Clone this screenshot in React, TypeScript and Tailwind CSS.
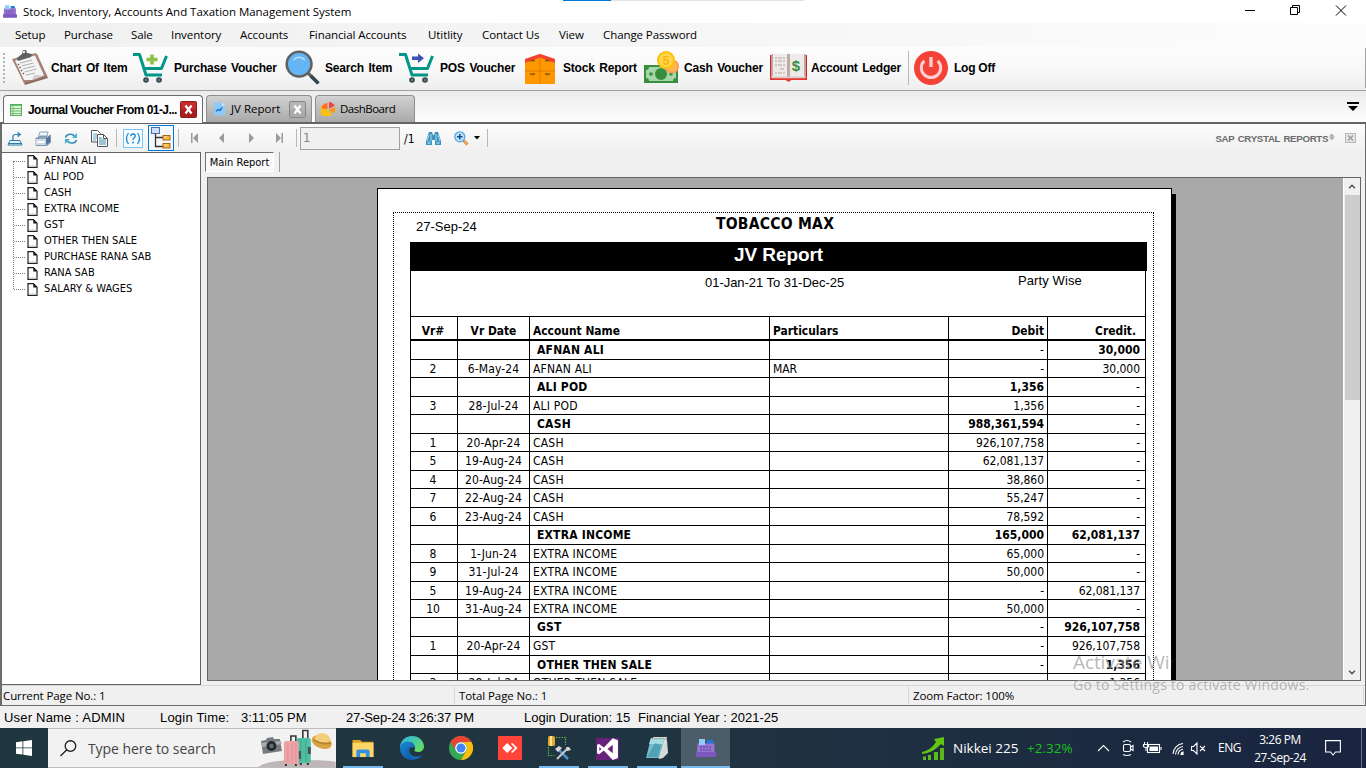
import React from "react";
import { FcSearch } from "react-icons/fc";

const UI = "font-['Open_Sans','Noto_Sans',sans-serif]";
const TAHOMA = "font-['DejaVu_Sans_Condensed','DejaVu_Sans',sans-serif]";
const ARIAL = "font-['Liberation_Sans',Arial,sans-serif]";

/* ---------- icons ---------- */

const AppIcon = ({ className }: { className: string }) => (
  <svg viewBox="0 0 20 20" className={className}>
    <rect x="11" y="2" width="6" height="4" rx="1" fill="#1e78e0" />
    <path d="M1.500 5.500h17V15H1z" fill="#9575cd" />
    <rect x="0" y="14" width="20" height="5" rx="1" fill="#7e57c2" />
    <path d="M4 9h12M4 12h12" stroke="#7048b8" strokeWidth="1.400" strokeDasharray="2 1" />
    <rect x="3" y="1" width="6" height="6" fill="#90caf9" />
  </svg>
);

const Clipboard = () => (
  <svg viewBox="0 0 38 37" className="h-[37px] w-[38px]">
    <path d="M2 11 26 5l11 24-23 7z" fill="#8d6e63" />
    <path d="M1 10 25 4l11 23-23 7z" fill="#a98274" />
    <path d="M4 11.500 24 6.500l9 20L21 31l-8 0z" fill="#f4f4f4" />
    <path d="M21 31l2-5 10 .5z" fill="#cfcfcf" />
    <path d="M9 14l12-3M10.500 17l12-3M12 20l12-3M13.500 23l12-3M15 26l9-2" stroke="#b0b0b0" strokeWidth="1" />
    <path d="M7 15l1 1M8.500 18l1 1M10 21l1 1M12 24l1 1" stroke="#555" strokeWidth="1.300" />
    <path d="M6 9l5-4 1-4 3 0 1 3 5 1-1 3-13 4z" fill="#616161" />
    <circle cx="13" cy="3" r="1.200" fill="#eee" />
  </svg>
);

const Cart = ({ arrow }: { arrow?: boolean }) => (
  <svg viewBox="0 0 35 32" className="h-[32px] w-[35px]">
    <path d="M0 2.500h6.500l6.500 20.500h16M10.500 16.500h18l5-12.500" fill="none" stroke="#009688" strokeWidth="3" strokeLinejoin="round" />
    <circle cx="13" cy="28" r="2.800" fill="#37474f" />
    <circle cx="26" cy="28" r="2.800" fill="#37474f" />
    <circle cx="13" cy="28" r="1" fill="#78909c" />
    <circle cx="26" cy="28" r="1" fill="#78909c" />
    {arrow ? (
      <path d="M13 4.500h6V1.500L25 6.300 19 11V8H13z" fill="#3f51b5" />
    ) : (
      <path d="M17.200 2.500h3.600v3.200h3.700v3.600h-3.700v3.200h-3.600V9.300h-3.700V5.700h3.700z" fill="#8bc34a" />
    )}
  </svg>
);

const Cabinet = () => (
  <svg viewBox="0 0 30 30" className="mt-[3px] h-[30px] w-[30px]">
    <path d="M0 5 15 0l15 5v25H0z" fill="#ff9800" />
    <path d="M0 5 15 0l15 5v4L15 3.500 0 9z" fill="#f44336" />
    <path d="M15 4v26M0 17h30" stroke="#e07c00" strokeWidth="1" />
    <path d="M5 6.500h5M20 6.500h5M5 20h5M20 20h5" stroke="#8a5200" strokeWidth="1.300" />
    <path d="M7 7.500h1M22 7.500h1M7 21.200h1M22 21.200h1" stroke="#c66900" strokeWidth="1.400" />
  </svg>
);

const Money = () => (
  <svg viewBox="0 0 35 33" className="h-[33px] w-[35px]">
    <rect x="0" y="14" width="34" height="18" fill="#388e3c" />
    <path d="M5 16h24c0 2 1 3 3 3v8c-2 0-3 1-3 3H5c0-2-1-3-3-3v-8c2 0 3-1 3-3z" fill="#a5d6a7" />
    <circle cx="17" cy="23" r="6" fill="#388e3c" />
    <circle cx="7" cy="23" r="1.800" fill="#388e3c" />
    <circle cx="27" cy="23" r="1.800" fill="#388e3c" />
    <circle cx="28" cy="15.500" r="7" fill="#ff9860" />
    <circle cx="28" cy="15.500" r="5.200" fill="#ffb74d" />
    <circle cx="22" cy="9" r="9" fill="#ffc107" />
    <circle cx="22" cy="9" r="7" fill="#ffd54f" />
    <text x="22" y="13.500" textAnchor="middle" fontSize="12" fontWeight="700" fontFamily="Liberation Sans" fill="#ffb300">5</text>
  </svg>
);

const Book = () => (
  <svg viewBox="0 0 37 28" className="h-[28px] w-[37px]">
    <path d="M0 1h5v23H0zM32 1h5v23h-5z" fill="#c62828" />
    <path d="M0 22h37v4H21c-1 2-4 2-5 0H0z" fill="#e53935" />
    <rect x="1.500" y="0" width="34" height="24" fill="#eeeae9" />
    <path d="M1.500 0h1.500v22h-1.500zM34 0h1.500v22H34zM17 0h3v24h-3z" fill="#bcaaa4" />
    <path d="M2 22.500h33v1.800H2z" fill="#d7ccc8" />
    <path d="M8 4h7M8 7h7M8 11h7M10 15h5M8 19h7" stroke="#b8a49c" strokeWidth="1.200" strokeDasharray="4 1" />
    <path d="M5 4h2M5 7h2M5 11h2M5 19h2" stroke="#b8a49c" strokeWidth="1.200" />
    <text x="26" y="16.500" textAnchor="middle" fontSize="15" fontWeight="700" fontFamily="Liberation Sans" fill="#388e3c">$</text>
  </svg>
);

const Power = () => (
  <svg viewBox="0 0 34 34" className="h-[34px] w-[34px]">
    <circle cx="17" cy="17" r="17" fill="#f44336" />
    <path d="M10.300 9.800a9.700 9.700 0 1 0 13.400 0" fill="none" stroke="#ffcdd2" strokeWidth="3" />
    <path d="M17 6v10" stroke="#ffcdd2" strokeWidth="3.400" />
  </svg>
);

const TabGrid = () => (
  <svg viewBox="0 0 12 12" className="h-[12px] w-[12px] shrink-0">
    <rect x=".5" y=".5" width="11" height="11" fill="#dff3df" stroke="#55b059" />
    <path d="M1 1.500h10M1 4.500h10M1 7h10M1 9.500h10M3 1v10" stroke="#6cc070" strokeWidth="1" />
  </svg>
);

const TabDoc = () => (
  <svg viewBox="0 0 12 13" className="h-[14px] w-[12px] shrink-0">
    <path d="M1 0h8l3 3v10H1z" fill="#90caf9" />
    <path d="M9 0l3 3H9z" fill="#d6ebff" />
    <path d="M3 9l2-2 2 1 2-3" stroke="#1976d2" strokeWidth="1.400" fill="none" />
  </svg>
);

const TabPie = () => (
  <svg viewBox="0 0 14 14" className="h-[14px] w-[14px] shrink-0">
    <path d="M6 2v6l5 4A6.500 6.500 0 1 1 6 2z" fill="#ffc107" />
    <path d="M6.500 7V1A6 6 0 0 0 .5 6.500z" fill="#ff6d2d" />
    <path d="M8 6.500V0a6.500 6.500 0 0 1 5.500 4z" fill="#f44336" />
    <path d="M8 7.500 14 5.500a6 6 0 0 1-2 6z" fill="#ff9800" />
  </svg>
);

const Close = ({ red }: { red?: boolean }) => (
  <svg viewBox="0 0 17 17" className="h-[17px] w-[17px] shrink-0">
    <rect x=".5" y=".5" width="16" height="16" rx="1" fill={red ? "#c62c2c" : "#b5b5b5"} stroke={red ? "#8c1b1b" : "#868686"} />
    <path d="M1 8.500h15V16H1z" fill={red ? "#a51f1f" : "#ababab"} />
    <path d="M5.500 4.500l6 8M11.500 4.500l-6 8" stroke="#fff" strokeWidth="2.200" />
  </svg>
);

const ExportIcon = () => (
  <svg viewBox="0 0 16 15" className="h-[15px] w-[16px]">
    <path d="M3 9.500h10l2 4.500H1z" fill="#e6f5fb" stroke="#2b7ca8" />
    <path d="M1 12.500h14" stroke="#2b7ca8" />
    <path d="M6 10V5.500c0-1.500 1-2 2.500-2H11" fill="none" stroke="#2b7ca8" strokeWidth="1.200" />
    <path d="M10.500 .5 14.500 3.500l-4 3z" fill="#3b8fbd" />
  </svg>
);

const PrintIcon = () => (
  <svg viewBox="0 0 16 15" className="h-[15px] w-[16px]">
    <path d="M5 1h8l-1.500 6H3z" fill="#eef6fc" stroke="#89a5bb" />
    <path d="M1 7h3l1-2h7l-1 2h1l3-3 1 1v6l-4 3.500H1z" fill="#8fa7bf" stroke="#6d87a2" strokeWidth=".8" />
    <path d="M1 8h10v6H1z" fill="#cddbe8" />
    <path d="M2.500 10h7v2h-7z" fill="#fff" />
    <path d="M11 8l4-3v6l-4 3z" fill="#50739a" />
  </svg>
);

const RefreshIcon = () => (
  <svg viewBox="0 0 14 12" className="h-[13px] w-[14px]">
    <path d="M1.500 5C2.500 1.500 8 .5 10.500 3.500" fill="none" stroke="#3390b8" strokeWidth="1.600" />
    <path d="M13 .5v5H8z" fill="#46b2d4" />
    <path d="M12.500 7.500C11.500 11 6 11.500 3.500 8.800" fill="none" stroke="#3390b8" strokeWidth="1.600" />
    <path d="M1 11.500v-5h5z" fill="#46b2d4" />
  </svg>
);

const CopyIcon = () => (
  <svg viewBox="0 0 17 17" className="h-[17px] w-[17px]">
    <path d="M.5.5h6l3 3v8.500h-9z" fill="#fff" stroke="#555" />
    <path d="M2 4h4M2 6h5M2 8h5M2 10h3" stroke="#65a6c4" />
    <path d="M6.500 4.500h6l4 4v8h-10z" fill="#fff" stroke="#555" />
    <path d="M12.500 4.500v4h4" fill="none" stroke="#555" />
    <path d="M8 8h3M8 10h7M8 12h7M8 14h7" stroke="#3c89ae" />
  </svg>
);

const HelpIcon = () => (
  <svg viewBox="0 0 20 19" className="h-[19px] w-[20px]">
    <rect x=".5" y=".5" width="19" height="18" fill="#f4fbff" stroke="#7cc4f2" />
    <path d="M5.500 4Q1.500 9.500 5.500 15M14.500 4Q18.500 9.500 14.500 15" fill="none" stroke="#1e88d8" strokeWidth="1.200" />
    <path d="M7.800 7.300Q8 5 10 5q2.200 0 2.200 2 0 1.200-1.300 2Q10 9.700 10 11" fill="none" stroke="#1e88d8" strokeWidth="1.400" />
    <circle cx="10" cy="13.500" r="1" fill="#1e88d8" />
  </svg>
);

const TreeIcon = () => (
  <svg viewBox="0 0 20 22" className="h-[22px] w-[20px]">
    <path d="M4.500 7v12.500H12M4.500 10.500H12" fill="none" stroke="#333" strokeWidth="1.300" />
    <rect x=".5" y=".5" width="8" height="6" fill="#cfe0fa" stroke="#536c9c" />
    <rect x="12" y="8.500" width="7" height="4.500" fill="#ffb546" stroke="#a96618" />
    <rect x="12" y="16.500" width="7" height="4.500" fill="#ffb546" stroke="#a96618" />
    <path d="M13 10h3M13 18h3" stroke="#ffe1a8" />
  </svg>
);

const Nav = ({ d, className }: { d: string; className: string }) => (
  <svg viewBox="0 0 8 10" className={"h-[10px] w-[8px] shrink-0 " + className}>
    <path d={d} fill="#9a9a9a" />
  </svg>
);

const Binoculars = () => (
  <svg viewBox="0 0 15 13" className="h-[13px] w-[15px]">
    <path d="M3 0h3l1 3h1l1-3h3l3 9v4H9V8H6v5H0V9z" fill="#3f90bc" />
    <path d="M3 3l-2 6M5 2v7M10 2v7M12 3l2 6" stroke="#a9dcf3" strokeWidth="1" />
    <path d="M1.500 9.500h3v2.500h-3zM10.500 9.500h3v2.500h-3z" fill="#7cc4e6" />
  </svg>
);

const ZoomIcon = () => (
  <svg viewBox="0 0 15 15" className="h-[15px] w-[15px]">
    <path d="M9.500 9.500l4 4" stroke="#d98735" strokeWidth="3" />
    <path d="M9.500 9.500l4 4" stroke="#f7c98e" strokeWidth="1" />
    <circle cx="5.800" cy="5.800" r="5" fill="#bfe2fa" stroke="#5aa7dc" strokeWidth="1.300" />
    <path d="M5.800 3v5.600M3 5.800h5.600" stroke="#174f8c" strokeWidth="1.500" />
  </svg>
);

const FileIcon = () => (
  <svg viewBox="0 0 11 13" className="h-[13px] w-[11px]">
    <path d="M1 .7h5.500L10 4.200v8.100H1z" fill="#fff" stroke="#222" strokeWidth="1.200" />
    <path d="M6.500.7v3.500H10z" fill="#222" stroke="#222" strokeWidth=".6" />
    <path d="M2 11h7.500" stroke="#ccc" />
  </svg>
);

/* ---------- data ---------- */

const menu: [string, string][] = [
  ["Setup", "w-[49px]"],
  ["Purchase", "w-[67px]"],
  ["Sale", "w-[40px]"],
  ["Inventory", "w-[69px]"],
  ["Accounts", "w-[69px]"],
  ["Financial Accounts", "w-[119px]"],
  ["Utitlity", "w-[54px]"],
  ["Contact Us", "w-[77px]"],
  ["View", "w-[44px]"],
  ["Change Password", "w-[110px]"],
];

const tools: [string, string, string, React.ReactNode][] = [
  ["Chart Of Item", "w-[122px]", "w-[40px]", <Clipboard />],
  ["Purchase Voucher", "w-[152px]", "w-[41px]", <Cart />],
  ["Search Item", "w-[114px]", "w-[40px]", <FcSearch className="-ml-[3px] h-[41px] w-[41px] shrink-0" />],
  ["POS Voucher", "w-[126px]", "w-[41px]", <Cart arrow />],
  ["Stock Report", "w-[119px]", "w-[38px]", <Cabinet />],
  ["Cash Voucher", "w-[126px]", "w-[40px]", <Money />],
  ["Account Ledger", "w-[138px]", "w-[41px]", <Book />],
];

const tree = ["AFNAN ALI", "ALI POD", "CASH", "EXTRA INCOME", "GST", "OTHER THEN SALE", "PURCHASE RANA SAB", "RANA SAB", "SALARY & WAGES"];

type Row = [string, string, string, string, string, string, string];
const H18 = "h-[18px]";
const H19 = "h-[19px]";
const rows: Row[] = [
  [H19, "", "", "AFNAN ALI", "", "-", "30,000"],
  [H18, "2", "6-May-24", "AFNAN ALI", "MAR", "-", "30,000"],
  [H19, "", "", "ALI POD", "", "1,356", "-"],
  [H18, "3", "28-Jul-24", "ALI POD", "", "1,356", "-"],
  [H19, "", "", "CASH", "", "988,361,594", "-"],
  [H18, "1", "20-Apr-24", "CASH", "", "926,107,758", "-"],
  [H19, "5", "19-Aug-24", "CASH", "", "62,081,137", "-"],
  [H18, "4", "20-Aug-24", "CASH", "", "38,860", "-"],
  [H19, "7", "22-Aug-24", "CASH", "", "55,247", "-"],
  [H18, "6", "23-Aug-24", "CASH", "", "78,592", "-"],
  [H19, "", "", "EXTRA INCOME", "", "165,000", "62,081,137"],
  [H18, "8", "1-Jun-24", "EXTRA INCOME", "", "65,000", "-"],
  [H19, "9", "31-Jul-24", "EXTRA INCOME", "", "50,000", "-"],
  [H18, "5", "19-Aug-24", "EXTRA INCOME", "", "-", "62,081,137"],
  [H18, "10", "31-Aug-24", "EXTRA INCOME", "", "50,000", "-"],
  [H19, "", "", "GST", "", "-", "926,107,758"],
  [H19, "1", "20-Apr-24", "GST", "", "-", "926,107,758"],
  [H18, "", "", "OTHER THEN SALE", "", "-", "1,356"],
  [H19, "3", "28-Jul-24", "OTHER THEN SALE", "", "-", "1,356"],
];

const ReportRow = ({ row }: { row: Row }) => {
  const [h, no, date, name, part, debit, credit] = row;
  const bold = no === "";
  return (
    <div className={`grid shrink-0 grid-cols-[47px_72px_240px_179px_99px_98px] whitespace-nowrap border-b border-black text-[12px] leading-[19px] ${h} ${bold ? "font-bold" : "tracking-[-0.05px]"}`}>
      <div className="border-r border-black pr-[2px] text-center">{no}</div>
      <div className="border-r border-black text-center tracking-[0.1px]">{date}</div>
      <div className={`border-r border-black tracking-[0.2px] ${bold ? "pl-[7px]" : "pl-[3px]"}`}>{name}</div>
      <div className="border-r border-black pl-[3px]">{part}</div>
      <div className={`border-r border-black pr-[3px] text-right ${debit === "-" ? "font-normal" : ""}`}>{debit}</div>
      <div className={`border-r border-black pr-[5px] text-right ${credit === "-" ? "font-normal" : ""}`}>{credit}</div>
    </div>
  );
};

const Sep = ({ className }: { className: string }) => <div className={"w-px shrink-0 bg-[#b8b8b8] " + className} />;

/* ---------- taskbar icons ---------- */

const Explorer = () => (
  <svg viewBox="0 0 22 20" className="h-[19px] w-[22px]">
    <path d="M0 1h8l2 2h12v16H0z" fill="#e5a522" />
    <path d="M0 4h22v15H0z" fill="#ffd766" />
    <path d="M4 19v-6q0-2 2-2h10q2 0 2 2v6h-4v-4H8v4z" fill="#3291e0" />
  </svg>
);

const Edge = () => (
  <svg viewBox="0 0 24 24" className="h-[24px] w-[24px]">
    <defs>
      <linearGradient id="edgeTop" x1="0" y1="0" x2="1" y2="1">
        <stop offset="0" stopColor="#2bb7ea" />
        <stop offset="1" stopColor="#6fe04d" />
      </linearGradient>
      <linearGradient id="edgeLow" x1="0" y1="0" x2="1" y2="1">
        <stop offset="0" stopColor="#1a8ad8" />
        <stop offset="1" stopColor="#0c4a94" />
      </linearGradient>
    </defs>
    <path d="M0 12C0 5 5 0 12 0s12 5 12 10.500c0 3.500-2.800 5.500-6 5.500-2.500 0-4-1-3.500-2 1.500-2 .5-5.500-3.500-5.500C6 8.500 1 9 0 12z" fill="url(#edgeTop)" />
    <path d="M0 12c0-4 4-6.500 8-6.500 5 0 7.500 3.500 6.500 7-3-3-7 0-5.500 4 1.500 4 7 6 12.500 3C19 22.500 16 24 12 24 5 24 0 18.500 0 12z" fill="url(#edgeLow)" />
    <path d="M7.500 12.500c-2 6 3 11.500 9 10.500 2-.5 4-1.800 5-3.500-5 2.500-11 .5-12-3.500-.4-1.500-.2-3 .7-4z" fill="#1268b5" />
  </svg>
);

const Chrome = () => (
  <svg viewBox="0 0 24 24" className="h-[24px] w-[24px]">
    <circle cx="12" cy="12" r="12" fill="#34a853" />
    <path d="M1.600 6A12 12 0 0 1 22.400 6H12a6 6 0 0 0-5.200 9z" fill="#ea4335" />
    <path d="M22.400 6A12 12 0 0 1 12 24l5.200-9A6 6 0 0 0 12 6z" fill="#fbbc05" />
    <circle cx="12" cy="12" r="5.800" fill="#fff" />
    <circle cx="12" cy="12" r="4.500" fill="#4285f4" />
  </svg>
);

const AnyDesk = () => (
  <svg viewBox="0 0 24 24" className="h-[24px] w-[24px]">
    <rect width="24" height="24" fill="#ff4438" />
    <path d="M9.300 7l5 5-5 5-5-5z" fill="#fff" />
    <path d="M13 7.800l1.300-.9L19.500 12l-5.200 5.100-1.300-1L17 12z" fill="#fff" />
  </svg>
);

const SqlTools = () => (
  <svg viewBox="0 0 24 24" className="h-[24px] w-[24px]">
    <path d="M9 1.500h9.500V9M1.500 11v8.500h6" fill="none" stroke="#58b847" strokeWidth="1.200" strokeDasharray="1.500 1.200" />
    <rect x="1" y="0" width="7" height="10" rx="1.500" fill="#e2aa2f" />
    <rect x="3" y="0" width="2" height="10" fill="#ffe18a" />
    <path d="M12 14l9 9" stroke="#4b92d3" strokeWidth="2.500" />
    <path d="M20 13l-10 10" stroke="#c9c9c9" strokeWidth="2" />
    <path d="M8 13l4-3 3 2-4 4zM19 11l3 0 2 3-4 1z" fill="#d8d8d8" />
  </svg>
);

const VisualStudio = () => (
  <svg viewBox="0 0 22 22" className="h-[23px] w-[23px]">
    <rect y="1" width="22" height="21" fill="#68217a" />
    <path d="M1 7.500 3 6.700 7.500 10 16 1.200 21 3v17l-5 2-8.500-9L3 16.500 1 15.500zM16 7.500 11 11.500l5 4zM3.200 9.500v4L5.200 11.500z" fill="#fff" fillRule="evenodd" />
  </svg>
);

const Notepad = () => (
  <svg viewBox="0 0 24 24" className="h-[24px] w-[24px]">
    <path d="M8 1h14l-4 21-4 1z" fill="#e6e2d4" />
    <path d="M6 2h14l-6 20H1z" fill="#72bccc" />
    <path d="M6 2h14l-2 6H4z" fill="#a6dce4" />
    <path d="M7 2.500h14" stroke="#8d979b" strokeWidth="1.500" strokeDasharray="1.200 1" />
    <path d="M14 22l8-19 1 14-5 5z" fill="#d5d8d8" />
    <path d="M2 21l8-14 6 2-3 12z" fill="#3c8fa6" opacity=".6" />
  </svg>
);

const SearchArt = () => (
  <svg viewBox="0 0 78 38" className="h-[38px] w-[78px]">
    <path d="M0 38q10-7 40-7 30 0 38 2v5z" fill="#bfb6b8" />
    <path d="M3 12l5-1 1-2 6-1 1 2 6 0 2 12-19 3z" fill="#777b80" />
    <path d="M3 14l20-2 1 3-20 3z" fill="#a9acb0" />
    <circle cx="13.500" cy="17" r="5" fill="#26292c" />
    <circle cx="13.500" cy="17" r="2.200" fill="#5d7180" />
    <path d="M33 12V7h5v6M45 9V1.500h5V10" fill="none" stroke="#35383c" strokeWidth="1.600" />
    <rect x="39" y="9" width="14" height="25" rx="2" fill="#4fbfa2" />
    <path d="M43 11v21M48 11v21" stroke="#2f9c82" strokeWidth=".7" />
    <rect x="26" y="12" width="15" height="23" rx="2" fill="#eda3a5" />
    <path d="M30 14v19M34.500 14v19M38 14v19" stroke="#d78f93" strokeWidth=".7" />
    <path d="M50 18h3v7h-3zM41 22h2v8h-2z" fill="#475054" />
    <path d="M28 35v2M38 35v2M43 34v2M50 34v2" stroke="#333" strokeWidth="2" />
    <ellipse cx="64" cy="13" rx="10.500" ry="6.500" transform="rotate(20 64 13)" fill="#d9a544" />
    <path d="M57 11q0-7 8-7 7 1 8 8-8 4-16-1z" fill="#f2cd7a" />
    <path d="M56 11q8 5 17 3" fill="none" stroke="#b5822f" strokeWidth="1.600" />
  </svg>
);

const TaskItem = ({ children, open, active }: { children: React.ReactNode; open?: boolean; active?: boolean }) => (
  <div className={`flex h-[40px] w-[49px] shrink-0 flex-col items-center ${active ? "bg-[#4a5d68]" : ""}`}>
    <div className="flex h-[38px] items-center justify-center pt-[2px]">{children}</div>
    <div className={`h-[2px] ${active ? "w-full" : "w-[40px]"} ${open || active ? "bg-[#76b9ed]" : ""}`} />
  </div>
);

/* ---------- page ---------- */

export default function App() {
  return (
    <div className={`relative flex h-[768px] w-[1366px] flex-col overflow-hidden bg-[#f0f0f0] text-black ${UI}`}>
      {/* title bar */}
      <header className="relative flex h-[23px] shrink-0 items-center bg-white pl-[3px]">
        <AppIcon className="h-[15px] w-[14px]" />
        <span className="ml-[6px] whitespace-nowrap text-[11.5px] tracking-[-0.03px]">Stock, Inventory, Accounts And Taxation Management System</span>
        <div className="absolute left-[563px] top-0 flex h-px w-[241px] bg-[#e3e3e3]">
          <div className="h-px w-[48px] bg-[#0078d7]" />
        </div>
        <svg viewBox="0 0 110 12" className="-mt-[3px] ml-auto mr-[16px] h-[12px] w-[110px]" fill="none" stroke="#000" strokeWidth="1">
          <path d="M5 6.500h10M50.500 3.500h7v7h-7zM52.500 3.500v-2h7v7h-2M96 1.500l10 10M106 1.500l-10 10" />
        </svg>
      </header>

      {/* menu */}
      <nav className="flex h-[24px] shrink-0 items-center bg-gradient-to-r from-[#f0f0f0] to-[#fcfcfc] pl-[15px]">
        {menu.map(([label, w]) => (
          <span key={label} className={`shrink-0 whitespace-nowrap text-[11.5px] tracking-[-0.08px] ${w}`}>{label}</span>
        ))}
      </nav>

      {/* main toolbar */}
      <div className={`flex h-[44px] shrink-0 items-center border-b border-[#a0a0a0] bg-gradient-to-b from-[#fdfdfd] via-[#f8f8f8] to-[#eeeeee] pb-[2px] ${ARIAL}`}>
        <div className="ml-[3px] mr-[6px] h-[30px] w-[2px] border-l-2 border-dotted border-[#b5b5b5]" />
        {tools.map(([label, w, iw, icon]) => (
          <div key={label} className={`flex shrink-0 items-center ${w}`}>
            <div className={`flex shrink-0 items-center ${iw}`}>{icon}</div>
            <span className="whitespace-nowrap text-[12px] font-bold tracking-[-0.2px] [word-spacing:1.5px]">{label}</span>
          </div>
        ))}
        <Sep className="mr-[5px] h-[34px]" />
        <Power />
        <span className="ml-[6px] text-[12px] font-bold tracking-[-0.25px]">Log Off</span>
        <div className="ml-auto h-[40px] w-px bg-[#a0a0a0]" />
      </div>

      {/* tabs */}
      <div className="flex h-[33px] shrink-0 items-end border-b-2 border-[#646464] bg-gradient-to-b from-[#ececec] to-[#fdfdfd] pl-[3px]">
        <div className={`mb-[-1px] flex h-[28px] w-[200px] items-center rounded-t-[4px] border border-b-0 border-[#6a6a6a] bg-[#fcfcfc] pl-[6px] ${ARIAL}`}>
          <TabGrid />
          <span className="ml-[6px] w-[152px] shrink-0 whitespace-nowrap text-[12px] font-bold tracking-[-0.56px]">Journal Voucher From 01-J...</span>
          <Close red />
        </div>
        <div className="ml-[3px] flex h-[27px] w-[106px] items-center rounded-t-[4px] border border-b-0 border-[#8e8e8e] bg-gradient-to-b from-[#d2d2d2] to-[#a9a9a9] pl-[6px]">
          <TabDoc />
          <span className="ml-[6px] w-[58px] shrink-0 whitespace-nowrap text-[11.500px]">JV Report</span>
          <Close />
        </div>
        <div className="ml-[3px] flex h-[27px] w-[100px] items-center rounded-t-[4px] border border-b-0 border-[#8e8e8e] bg-gradient-to-b from-[#d2d2d2] to-[#a9a9a9] pl-[5px]">
          <TabPie />
          <span className="ml-[5px] whitespace-nowrap text-[11.500px] tracking-[-0.5px]">DashBoard</span>
        </div>
        <svg viewBox="0 0 12 10" className="mb-[10px] ml-auto mr-[7px] h-[10px] w-[12px]">
          <path d="M0 0h12v2H0zM1 4h10L6 9z" fill="#000" />
        </svg>
      </div>

      {/* viewer */}
      <div className="flex h-[582px] shrink-0 flex-col border-b border-l-2 border-r border-[#6c6c6c]">
        <div className="flex h-[28px] shrink-0 items-center bg-gradient-to-b from-[#fcfcfc] to-[#f0f0f0] pl-[5px]">
          <ExportIcon />
          <div className="ml-[12px]"><PrintIcon /></div>
          <div className="ml-[13px]"><RefreshIcon /></div>
          <div className="ml-[13px]"><CopyIcon /></div>
          <Sep className="ml-[8px] h-[18px]" />
          <div className="ml-[6px]"><HelpIcon /></div>
          <div className="ml-[5px] flex h-[26px] w-[26px] items-center justify-center border border-[#0078d7] bg-[#f3f8fc]"><TreeIcon /></div>
          <Sep className="ml-[4px] h-[18px]" />
          <Nav d="M0 0h1.500v10H0zM7 0v10L2 5z" className="ml-[12px]" />
          <Nav d="M6 0v10L1 5z" className="ml-[19px]" />
          <Nav d="M1 0v10L6 5z" className="ml-[22px]" />
          <Nav d="M0 0v10L5 5zM5.500 0H7v10H5.500z" className="ml-[20px]" />
          <Sep className="ml-[12px] h-[18px]" />
          <div className={`ml-[3px] h-[23px] w-[100px] border border-[#a0a0a0] bg-[#f0f0f0] pl-[2px] pt-[1px] text-[13px] leading-[18px] text-[#8a7f8c] ${TAHOMA}`}>1</div>
          <span className={`ml-[4px] mt-[1px] w-[22px] text-[12px] ${TAHOMA}`}>/1</span>
          <Binoculars />
          <div className="ml-[13px]"><ZoomIcon /></div>
          <svg viewBox="0 0 6 4" className="ml-[5px] h-[4px] w-[6px]"><path d="M0 0h6L3 3.500z" fill="#000" /></svg>
          <Sep className="ml-[7px] h-[18px]" />
          <span className={`ml-auto mt-[3px] whitespace-nowrap text-[9.700px] font-bold tracking-[-0.300px] text-[#6b6b6b] [word-spacing:1px] ${ARIAL}`}>SAP CRYSTAL REPORTS<span className="ml-px align-[2px] text-[7px]">®</span></span>
          <svg viewBox="0 0 11 10" className="ml-[11px] mr-[9px] h-[10px] w-[11px]">
            <rect x=".5" y=".5" width="10" height="9" fill="#e4e4e4" stroke="#b8b8b8" />
            <path d="M3 2.500l5 5M8 2.500l-5 5" stroke="#9a9a9a" strokeWidth="1.300" />
          </svg>
        </div>

        <div className={`flex h-[533px] shrink-0 ${TAHOMA}`}>
          {/* groups tree */}
          <aside className="h-[533px] w-[199px] shrink-0 border border-l-0 border-[#646464] bg-white">
            <div className="relative flex flex-col">
              <div className="absolute left-[11px] top-[8px] h-[128px] border-l border-dotted border-[#808080]" />
              {tree.map((t) => (
                <div key={t} className="flex h-[16px] items-center pl-[12px] text-[11px] tracking-[0.02px]">
                  <div className="mr-[2px] w-[11px] border-t border-dotted border-[#808080]" />
                  <FileIcon />
                  <span className="ml-[6px] whitespace-nowrap pt-[1px]">{t}</span>
                </div>
              ))}
            </div>
          </aside>

          {/* report */}
          <section className="ml-[4px] flex w-[1156px] shrink-0 flex-col">
            <div className="flex h-[25px] shrink-0">
              <div className="flex h-[20px] w-[69px] items-center justify-center border border-b-white border-l-[#707070] border-r-white border-t-[#707070] bg-[#f8f8f8] pt-[2px] text-[11px]">
                <span className="whitespace-nowrap">Main Report</span>
              </div>
              <div className="ml-[5px] h-[20px] w-px bg-[#a0a0a0]" />
            </div>
            <div className="ml-[2px] flex h-[504px] shrink-0 border border-[#646464] bg-[#a9a9a9]">
              <div className="h-full w-[1135px] shrink-0 overflow-hidden pl-[169px] pt-[10px]">
                <div className="h-[760px] w-[795px] border border-black bg-white pl-[15px] pt-[23px] shadow-[4px_6px_0_0_#000]">
                  <div className="h-[720px] w-[761px] border border-dotted border-black pl-[16px]">
                    <div className="flex h-[29px]">
                      <span className={`ml-[6px] mt-[6px] w-[300px] text-[13px] leading-[16px] ${ARIAL}`}>27-Sep-24</span>
                      <span className="mt-[2px] whitespace-nowrap text-[15.500px] font-bold leading-[19px] tracking-[0.25px]">TOBACCO MAX</span>
                    </div>
                    <div className={`h-[29px] w-[737px] bg-black text-center text-[19px] font-bold leading-[26px] tracking-[-0.1px] text-white ${ARIAL}`}>JV Report</div>
                    <div className="flex w-[736px] flex-col border-l border-black">
                      <div className={`flex h-[46px] border-b border-r border-black text-[13px] leading-[16px] ${ARIAL}`}>
                        <span className="ml-[294px] mt-[4px] w-[313px] whitespace-nowrap tracking-[-0.04px]">01-Jan-21 To 31-Dec-25</span>
                        <span className="mt-[2px] tracking-[0.1px]">Party Wise</span>
                      </div>
                      <div className="grid h-[24px] grid-cols-[47px_72px_240px_179px_99px_98px] whitespace-nowrap border-b-2 border-black text-[11.900px] font-bold leading-[28px]">
                        <div className="border-r border-black pr-[2px] text-center">Vr#</div>
                        <div className="border-r border-black text-center">Vr Date</div>
                        <div className="border-r border-black pl-[3px]">Account Name</div>
                        <div className="border-r border-black pl-[3px]">Particulars</div>
                        <div className="border-r border-black pr-[3px] text-right">Debit</div>
                        <div className="border-r border-black pr-[9px] text-right">Credit.</div>
                      </div>
                      {rows.map((r, i) => <ReportRow key={i} row={r} />)}
                    </div>
                  </div>
                </div>
              </div>
              <div className="flex h-full w-[17px] shrink-0 flex-col items-center border-l border-white bg-[#f0f0f0]">
                <svg viewBox="0 0 8 6" className="my-[6px] h-[5px] w-[8px]"><path d="M.5 5 4 1.500 7.500 5" fill="none" stroke="#505050" strokeWidth="1.800" /></svg>
                <div className="h-[205px] w-[15px] bg-[#cdcdcd]" />
                <svg viewBox="0 0 8 6" className="mb-[5px] mt-auto h-[5px] w-[8px]"><path d="M.5 1 4 4.500 7.500 1" fill="none" stroke="#505050" strokeWidth="1.800" /></svg>
              </div>
            </div>
          </section>
        </div>

        {/* viewer status */}
        <div className="flex h-[20px] shrink-0 items-center border-t border-[#d7d7d7] bg-[#f0f0f0] text-[11.500px] tracking-[-0.1px]">
          <span className="w-[452px] pl-[1px]">Current Page No.: 1</span>
          <div className="h-[17px] w-px bg-[#d7d7d7]" />
          <span className="w-[453px] pl-[4px]">Total Page No.: 1</span>
          <div className="h-[17px] w-px bg-[#d7d7d7]" />
          <span className="pl-[4px]">Zoom Factor: 100%</span>
          <div className="ml-auto mr-[1px] h-[17px] w-px bg-[#d7d7d7]" />
        </div>
      </div>

      {/* session bar */}
      <div className={`flex h-[22px] shrink-0 items-center whitespace-nowrap bg-[#f0f0f0] pl-[4px] pt-[1px] text-[13px] ${ARIAL}`}>
        <span className="w-[156px] tracking-[0.2px]">User Name : ADMIN</span>
        <span className="w-[81px] tracking-[0.2px]">Login Time:</span>
        <span className="w-[105px]">3:11:05 PM</span>
        <span className="w-[178px] tracking-[-0.15px]">27-Sep-24 3:26:37 PM</span>
        <span className="w-[114px]">Login Duration: 15</span>
        <span>Financial Year : 2021-25</span>
      </div>

      {/* taskbar */}
      <footer className="flex h-[40px] shrink-0 items-center bg-gradient-to-r from-[#21373f] via-[#1f3441] to-[#1a2440] text-white">
        <div className="flex w-[48px] justify-center">
          <svg viewBox="0 0 16 16" className="h-[16px] w-[16px]" fill="#fff">
            <path d="M0 2.200 6.500 1.300v6.200H0zM7.300 1.200 16 0v7.500H7.300zM0 8.300h6.500v6.200L0 13.700zM7.300 8.300H16V16l-8.700-1.200z" />
          </svg>
        </div>
        <div className="flex h-[40px] w-[288px] items-center border-y border-[#bcbcbc] bg-[#f2f2f2] pl-[12px]">
          <svg viewBox="0 0 17 17" className="h-[17px] w-[17px]" fill="none" stroke="#1b1b1b" strokeWidth="1.300">
            <circle cx="10.500" cy="6" r="5.300" /><path d="M6.800 9.800.5 16" />
          </svg>
          <span className="ml-[11px] w-[171px] whitespace-nowrap text-[14px] tracking-[-0.05px] text-[#444]">Type here to search</span>
          <SearchArt />
        </div>
        <div className="ml-[2px] flex">
          <TaskItem open><Explorer /></TaskItem>
          <TaskItem><Edge /></TaskItem>
          <TaskItem><Chrome /></TaskItem>
          <TaskItem><AnyDesk /></TaskItem>
          <TaskItem open><SqlTools /></TaskItem>
          <TaskItem open><VisualStudio /></TaskItem>
          <TaskItem open><Notepad /></TaskItem>
          <TaskItem active><AppIcon className="h-[20px] w-[20px]" /></TaskItem>
        </div>
        <svg viewBox="0 0 23 23" className="ml-[192px] h-[23px] w-[23px] shrink-0">
          <path d="M0 15q9-2 14-10l-2-3 10-2v9l-3-2Q11 16 0 17z" fill="#62c512" />
          <path d="M1 19.500h3V23H1zM6 18h3v5H6zM12 15h4v8h-4zM18 11h4v12h-4z" fill="#5db81a" />
        </svg>
        <span className="ml-[8px] w-[74px] whitespace-nowrap text-[13.500px]">Nikkei 225</span>
        <span className="w-[70px] whitespace-nowrap text-[13.500px] text-[#18c21c]">+2.32%</span>
        <svg viewBox="0 0 110 18" className="h-[18px] w-[110px] shrink-0" fill="none" stroke="#fff" strokeWidth="1.100">
          <path d="M1 12l5.500-5.500L12 12" />
          <rect x="26.500" y="5.500" width="7" height="7" rx="1.500" />
          <path d="M33.500 8l2.500-1.500v5L33.500 10M26 3q4-3 8 0M26 15.500q4 2 8 0" />
          <rect x="50.500" y="5.500" width="12" height="8" /><path d="M53 8h7.500v3.500H53z" fill="#fff" /><path d="M64 8v3M47.500 3v3M50.500 3v3M46.500 5.500h5v2q-2.500 2-5 0zM49 9v3" />
          <path d="M76 15A11 11 0 0 1 86 4.500M78.500 15.500A8.500 8.500 0 0 1 86 7.500M81 15.500a6 6 0 0 1 5-5.200" /><path d="M84 15.500a2.500 2.500 0 0 1 2-2.500v2.500z" fill="#fff" />
          <path d="M94.500 7.500h2l3.500-3.500v11l-3.500-3.500h-2zM103 7l5 5M108 7l-5 5" />
        </svg>
        <span className="ml-[11px] w-[34px] text-[12px] tracking-[-0.5px]">ENG</span>
        <div className="flex w-[56px] flex-col items-center text-[11.900px] leading-[18px] tracking-[-0.4px]">
          <span className="whitespace-nowrap">3:26 PM</span>
          <span className="whitespace-nowrap">27-Sep-24</span>
        </div>
        <svg viewBox="0 0 16 16" className="ml-[17px] h-[16px] w-[16px]" fill="none" stroke="#fff" strokeWidth="1.100">
          <path d="M.6.600h14.800v11.400H10.500L8 15 5.500 12H.6z" />
        </svg>
        <div className="ml-auto mr-[4px] h-[40px] w-px bg-[#6b7487]" />
      </footer>

      {/* activation notice lies over the report and the status bar */}
      <div className="pointer-events-none absolute left-[1073px] top-[648px] whitespace-nowrap text-[#989898]/70">
        <div className="text-[19px] leading-[28px] tracking-[-0.1px]">Activate Wi<span className="text-[#989898]/10">ndows</span></div>
        <div className="text-[14px] leading-[18px] tracking-[0.2px]">Go to Settings to activate Windows.</div>
      </div>
    </div>
  );
}
